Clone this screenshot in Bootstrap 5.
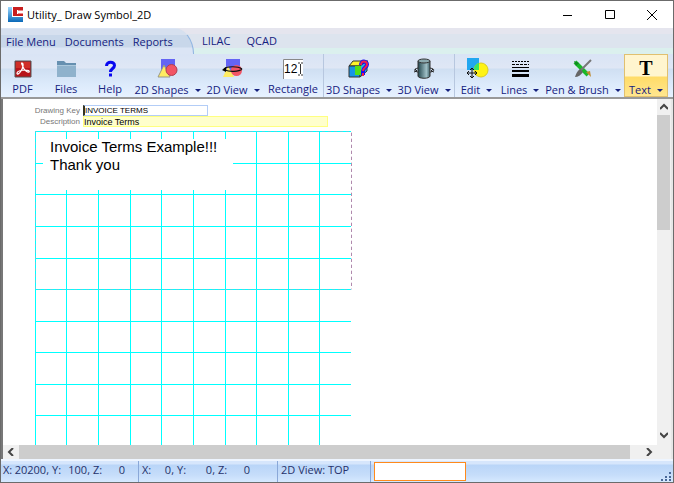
<!DOCTYPE html>
<html lang="en">
<head>
<meta charset="utf-8">
<meta name="viewport" content="width=device-width, initial-scale=1">
<title>Utility_ Draw Symbol_2D</title>
<link href="https://cdn.jsdelivr.net/npm/bootstrap@5.3.0/dist/css/bootstrap.min.css" rel="stylesheet">
<style>
body{font-family:"Open Sans","Noto Sans",sans-serif;font-size:11px;line-height:16px;color:#15217f}
.win{border:1px solid #6b6b6b;background:#fff}
.titlebar{height:27px;color:#000;padding-left:7px}
.titlebar span{padding-left:4px}
.winbtn{width:42px;height:26px;border:0;background:none;padding:0;display:flex;align-items:center;justify-content:center}
.menus{height:26px;background:linear-gradient(#e5e5ee 0 6px,#dde4ee 6px 20px,#dbf0ee 20px)}
.tabmenu{width:193px;padding-left:5px;gap:9px;border-right:1px solid #8fb4e2;border-top:1px solid transparent;border-top-right-radius:20px 26px;background:linear-gradient(#d6e0ef 0 6px,#c8d7ea 6px 18px,#dbe5f5 19px)}
.menus a{color:#15217f;text-decoration:none}
.tools{height:45px;background:linear-gradient(#d9e4f5 0,#dfe7f5 14px,#cfdff2 15px,#dceafb 30px,#e6f1ff 42px);border-bottom:2px solid #999}
.tool{border:0;background:none;color:#15217f;padding:4px 0 0;display:flex;flex-direction:column;align-items:center;white-space:nowrap;min-width:0}
.tool svg{width:24px;height:24px;flex:none}
.tool .cap{display:flex;align-items:center;justify-content:center;gap:6px;line-height:16px;width:100%}
.plain .cap{line-height:14px}
.arrow::after{content:"";border:3px solid transparent;border-top:3px solid #15217f;border-bottom:0;width:0}
.w44{width:44px}.w60{width:60px}.w71{width:71px}.w82{width:82px}
.tools .w44:first-child{width:43px}
.rule{border-left:1px solid #b7c7df}
.active-tool{border:1px solid #e0c070;background:linear-gradient(#fff5cf 0 21px,#ffdc68 22px,#ffe68f);padding-top:3px}
.workspace{border-left:2px solid #777;min-height:0}
.sheet{min-width:0;overflow:hidden;padding-top:6px}
.field{height:11px;font:8px/11px "Liberation Sans",sans-serif;color:#777}
.field label{width:80px;padding-right:3px;text-align:right}
.field input{height:11px;border:1px solid #b3cdf7;padding:0 1px;font:9px/9px "Liberation Sans",sans-serif;color:#000;outline:0;border-radius:0}
.field .key{width:125px;border-left:2px solid #332;padding-left:0;font-size:8px}
.field .desc{width:245px;background:#ffc;border-color:#ffff80;padding-left:0}
.drawing{display:block;margin:4px 0 0 32px;flex:none}
.drawing text{font:15px "Liberation Sans",sans-serif}
.vscroll{width:14px;background:#f0f0f0}
.hscroll{height:14px;background:#f0f0f0}
.bar{background:#cdcdcd}
.sb{border:0;background:none;padding:0;width:14px;height:16px;display:flex;align-items:center;justify-content:center;flex:none}
.hscroll .sb{height:14px;width:16px}
.vthumb{height:115px;width:13px}
.hthumb{flex:1;margin-right:11px}
.edge{width:2px;background:#e6e6e6}
.status{height:23px;border-top:2px solid #eef5ff;background:linear-gradient(#d6e6fc 0 3px,#b9d5f8 4px,#c6ddfa 14px,#d6e9ff)}
.cell{border-right:1px solid #8aa8d8;padding-left:3px;line-height:18px;white-space:nowrap;color:#26326b}
.cell:first-child{padding-left:2px}
.cell b{font-weight:400;text-align:right}
.c1{width:138px}.c2{width:139px}.c3{width:93px}
.n36{width:36px}.n28{width:28px}.n22{width:22px}.axis{width:10px;margin-left:3px}
.axis:first-child{margin-left:0}
.entry{width:92px;height:19px;border:1px solid #ff8a1c;border-radius:0;margin:1px 0 0 3px;background:#fff;outline:0}
</style>
<script src="https://cdn.jsdelivr.net/npm/bootstrap@5.3.0/dist/js/bootstrap.bundle.min.js"></script>
</head>
<body>
<div class="win vh-100 d-flex flex-column overflow-hidden">
<header class="titlebar d-flex align-items-center flex-shrink-0">
<svg width="15" height="15" viewBox="0 0 15 15"><defs><linearGradient id="blu" x2="0" y2="1"><stop stop-color="#9cd8ff"/><stop offset="1" stop-color="#0868b8"/></linearGradient></defs><path d="M0 0h4v10h11v5H0z" fill="url(#blu)"/><path d="M5 0h10v3H9v4h6v2H5z" fill="#c81e1e"/><path d="M10 3h5v1h-5zM10 6h5v1h-5z" fill="#e88"/></svg>
<span class="me-auto">Utility_ Draw Symbol_2D</span>
<button class="winbtn" aria-label="Minimize"><svg width="10" height="10"><path d="M0 5.500h9" stroke="#000"/></svg></button>
<button class="winbtn" aria-label="Maximize"><svg width="10" height="10"><path d="M.5.500h9v8h-9z" fill="none" stroke="#000"/></svg></button>
<button class="winbtn" aria-label="Close"><svg width="10" height="10"><path d="M0 0l10 10M10 0L0 10" stroke="#000"/></svg></button>
</header>
<nav class="menus d-flex flex-shrink-0">
<div class="tabmenu d-flex align-items-center"><a href="#">File Menu</a><a href="#">Documents</a><a href="#">Reports</a></div>
<div class="d-flex align-items-center ps-2 gap-3"><a href="#">LILAC</a><a href="#">QCAD</a></div>
</nav>
<div class="tools d-flex flex-shrink-0" role="toolbar" aria-label="Drawing tools">
<button class="tool plain w44"><svg viewBox="0 0 24 24"><path d="M4 3h16v16H4z" fill="#b8141a" stroke="#555"/><path d="M5 4h14v6H5z" fill="#e04030" opacity=".6"/><path d="M11 5c2 0 1 5-1 8s-4 4-4 2 5-3 8-3 5 1 4 2-5-2-6-5-2-4-1-4z" fill="none" stroke="#fff" stroke-width="1.200"/></svg><span class="cap">PDF</span></button>
<button class="tool plain w44"><svg viewBox="0 0 24 24"><path d="M3 3h7l2 2h10v13H3z" fill="#6690b0"/><path d="M3 7h19v12H3z" fill="#8fb2cc"/><path d="M3 7.500h19" stroke="#abc8dc"/></svg><span class="cap">Files</span></button>
<button class="tool plain w44"><svg viewBox="0 0 24 24"><path d="M8.500 8c0-5 8-5 8-.5 0 3-4 3-4 6.500" fill="none" stroke="#0808f0" stroke-width="3"/><path d="M11 15.500h3v3h-3z" fill="#0808f0"/></svg><span class="cap">Help</span></button>
<button class="tool w71"><svg viewBox="0 0 24 24"><path d="M5 1h14v14H5z" fill="#6464f4"/><path d="M8 7l6 12H2z" fill="#ffec62" stroke="#998"/><circle cx="15.500" cy="12" r="5.500" fill="#f25565" stroke="#b04050"/></svg><span class="cap arrow">2D Shapes</span></button>
<button class="tool w60"><svg viewBox="0 0 24 24"><path d="M5 1h14v13H5z" fill="#6464f4"/><path d="M7 8l6 11H2z" fill="#ffec62"/><circle cx="15.500" cy="12.500" r="5.500" fill="#f25565"/><path d="M3 11c3-3 14-3 18 0M4 12c4 2 14 2 17-1" fill="none" stroke="#111" stroke-width="1.200"/><path d="M1 12l4-3v5z"/></svg><span class="cap arrow">2D View</span></button>
<button class="tool plain w60"><svg viewBox="0 0 24 24"><path d="M2 1h20v20H2z" fill="#fff"/><path d="M2.500 21V1.500H22" fill="none" stroke="#888"/><text x="3" y="15" font-family="Liberation Sans" font-size="12">12</text><path d="M17 5h2m1 0h2m-2.500 1v10m-2.500 1h2m1 0h2" stroke="#333" fill="none"/></svg><span class="cap">Rectangle</span></button>
<button class="tool w71 rule"><svg viewBox="0 0 24 24"><path d="M2 8l4-5h15l-5 5z" fill="#fff22c" stroke="#333"/><path d="M2 8h11v11H2z" fill="#1695e5" stroke="#333"/><path d="M13 8l7-5v10l-7 6z" fill="#27b7d9" stroke="#333"/><path d="M8 8h6v9H8z" fill="#50df16"/><path d="M14 7c0-5 6-4 6-.5 0 3-4 3-4 6.500v4" fill="none" stroke="#1b10ee" stroke-width="4"/><path d="M14 7c0-5 6-4 6-.5 0 3-4 3-4 6.500m0 2v3" fill="none" stroke="#f02048" stroke-width="2"/></svg><span class="cap arrow">3D Shapes</span></button>
<button class="tool w60"><svg viewBox="0 0 24 24"><defs><linearGradient id="cyl"><stop stop-color="#23464e"/><stop offset=".7" stop-color="#9fbfc6"/><stop offset="1" stop-color="#3f626a"/></linearGradient></defs><path d="M6 10c-8 2 0 5 6 5s15-3 6-5" fill="none" stroke="#222"/><path d="M6 3v15c0 3 12 3 12 0V3z" fill="url(#cyl)" stroke="#333"/><ellipse cx="12" cy="3" rx="6" ry="2" fill="#8caab0" stroke="#333"/><path d="M2 14l3-1-2-2M22 14l-3-1 2-2" fill="none" stroke="#222"/></svg><span class="cap arrow">3D View</span></button>
<button class="tool w44 rule"><svg viewBox="0 0 24 24"><path d="M2 0h12v12H2z" fill="#22a7f0"/><circle cx="16" cy="12" r="7" fill="#fff314" stroke="#dbcc21"/><path d="M14 5v7H9c0-4 2-6 5-7z" fill="#39e663"/><path d="M7 10v10M2 15h10M5 12l2-2 2 2M5 18l2 2 2-2M4 13l-2 2 2 2M10 13l2 2-2 2" fill="none" stroke="#111"/></svg><span class="cap arrow">Edit</span></button>
<button class="tool w44"><svg viewBox="0 0 24 24"><path d="M4 3.500h17" stroke="#000" stroke-dasharray="2 1"/><path d="M4 6.500h17" stroke="#000" stroke-dasharray="3 1"/><path d="M4 9.500h17" stroke="#000"/><path d="M4 13h17" stroke="#000" stroke-width="2"/><path d="M4 17.500h17" stroke="#000" stroke-width="3"/></svg><span class="cap arrow">Lines</span></button>
<button class="tool w82"><svg viewBox="0 0 24 24"><path d="M4 4l13 13" stroke="#19b829" stroke-width="4"/><path d="M3 3l5 2-3 3z" fill="#118a21"/><path d="M15 14l5 5-1-6z" fill="#c0882b"/><path d="M20 2L9 13" stroke="#777" stroke-width="2"/><path d="M9 11l3 3c-2 3-5 5-8 5 1-3 2-6 5-8z" fill="#666"/></svg><span class="cap arrow">Pen &amp; Brush</span></button>
<button class="tool w44 active-tool"><svg viewBox="0 0 24 24"><text x="12" y="17" text-anchor="middle" font-family="Liberation Serif" font-weight="bold" font-size="20">T</text></svg><span class="cap arrow">Text</span></button>
</div>
<main class="workspace d-flex flex-grow-1">
<div class="d-flex flex-column flex-grow-1 sheet pt-0">
<div class="sheet d-flex flex-column flex-grow-1">
<div class="field d-flex flex-shrink-0"><label for="key">Drawing Key</label><input id="key" class="key" value="INVOICE TERMS"></div>
<div class="field d-flex flex-shrink-0"><label for="desc">Description</label><input id="desc" class="desc" value="Invoice Terms"></div>
<svg class="drawing" width="320" height="318" viewBox="0 0 320 318" shape-rendering="crispEdges">
<path d="M.5.500V318M31.500.500V318M63.500.500V318M95.500.500V318M126.500.500V318M158.500.500V318M190.500.500V318M221.500.500V318M253.500.500V318M284.500.500V318M0 .5h316M0 32.500h316M0 63.500h316M0 95.500h316M0 127.500h316M0 158.500h316M0 190.500h316M0 221.500h316M0 253.500h316M0 284.500h316" fill="none" stroke="#00ffff"/>
<path d="M.5 158V.500H316.500V158.500H0" fill="none" stroke="#c09abd" stroke-opacity=".4" stroke-dasharray="3 3"/>
<path d="M316.500 2V158" stroke="#b08aad" stroke-dasharray="3 3"/>
<path d="M8 8h190v51H8z" fill="#fff"/>
<text x="15" y="21">Invoice Terms Example!!!</text><text x="15" y="39">Thank you</text></svg>
</div>
<div class="hscroll d-flex flex-shrink-0"><button class="sb" aria-label="Scroll left"><svg width="8" height="8"><path d="M6 0L2 4l4 4" fill="none" stroke="#444" stroke-width="2"/></svg></button><div class="bar hthumb"></div><button class="sb" aria-label="Scroll right"><svg width="8" height="8"><path d="M2 0l4 4-4 4" fill="none" stroke="#444" stroke-width="2"/></svg></button></div>
</div>
<div class="vscroll d-flex flex-column flex-shrink-0"><button class="sb" aria-label="Scroll up"><svg width="8" height="8"><path d="M0 6l4-4 4 4" fill="none" stroke="#444" stroke-width="2"/></svg></button><div class="bar vthumb mb-auto"></div><button class="sb mb-3" aria-label="Scroll down"><svg width="8" height="8"><path d="M0 2l4 4 4-4" fill="none" stroke="#444" stroke-width="2"/></svg></button></div>
<div class="edge"></div>
</main>
<footer class="status d-flex flex-shrink-0">
<div class="cell c1 d-flex"><span class="axis">X:</span><b class="n36">20200,</b><span class="axis">Y:</span><b class="n28">100,</b><span class="axis">Z:</span><b class="n22">0</b></div>
<div class="cell c2 d-flex"><span class="axis">X:</span><b class="n22">0,</b><span class="axis">Y:</span><b class="n28">0,</b><span class="axis">Z:</span><b class="n22">0</b></div>
<div class="cell c3">2D View: TOP</div>
<input class="entry" aria-label="Command">
<svg class="ms-auto mt-auto" width="12" height="12"><path d="M8 2h2v2H8zM4 6h2v2H4zM8 6h2v2H8zM0 9h2v2H0zM4 9h2v2H4zM8 9h2v2H8z" fill="#4a6898"/></svg>
</footer>
</div>
</body>
</html>
